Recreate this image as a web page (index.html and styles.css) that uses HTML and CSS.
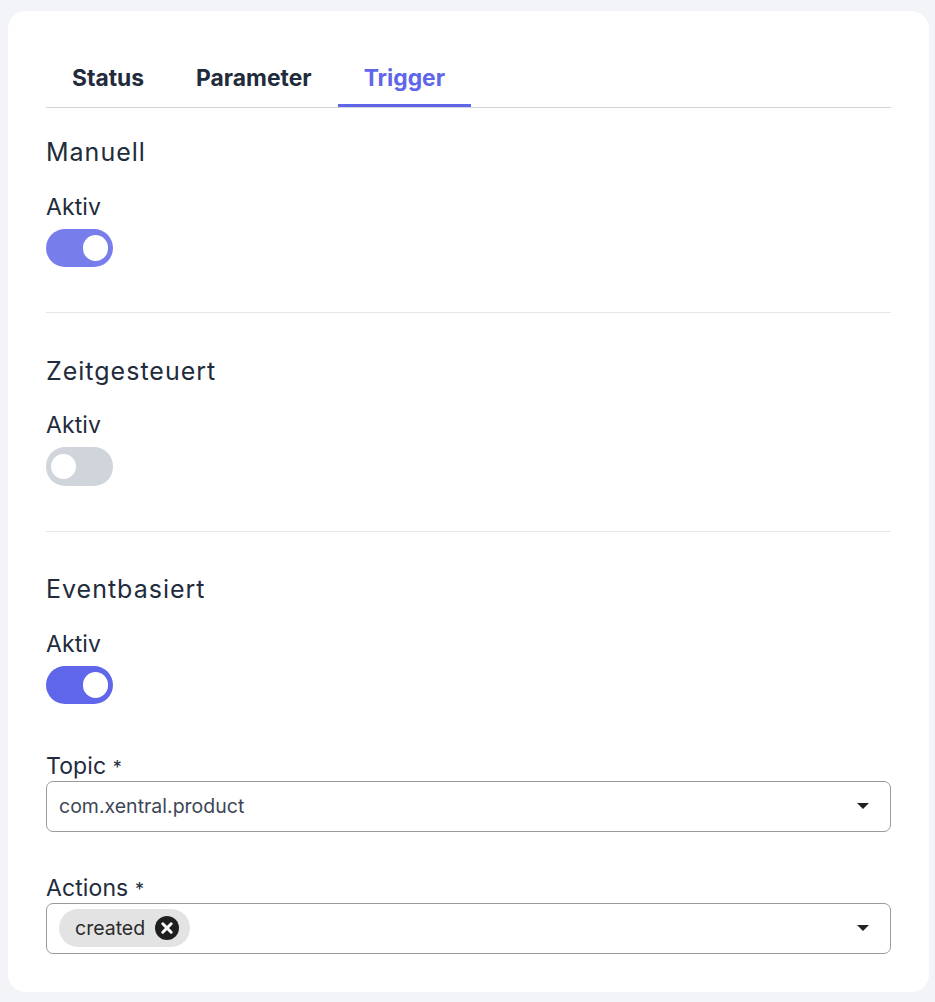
FILE: index.html
```html
<!DOCTYPE html>
<html>
	<head>
		<title>Trigger</title>
		<link rel="stylesheet" href="styles.css">
	</head>
	<body>
		<div class='card'>
			<div class='tabs'>
				<div class='tab'>Status</div>
				<div class='tab'>Parameter</div>
				<div class='tab active'>Trigger</div>
			</div>
			<div class='section'>
				<h2>Manuell</h2>
				<div class='label'>Aktiv</div>
				<div class='switch on faded'><span class='knob'></span></div>
			</div>
			<div class='section'>
				<h2>Zeitgesteuert</h2>
				<div class='label'>Aktiv</div>
				<div class='switch'><span class='knob'></span></div>
			</div>
			<div class='section last'>
				<h2>Eventbasiert</h2>
				<div class='label'>Aktiv</div>
				<div class='switch on'><span class='knob'></span></div>
				<div class='field'>
					<div class='label'>Topic <span class='req'>*</span></div>
					<div class='select'>
						<span class='value'>com.xentral.product</span>
						<span class='arrow'></span>
					</div>
				</div>
				<div class='field'>
					<div class='label'>Actions <span class='req'>*</span></div>
					<div class='select multi'>
						<span class='chip'>created
							<svg class='chip-x' width='24' height='24' viewBox='0 0 24 24'>
								<circle cx='12' cy='12' r='12' fill='#1f1f1f'/>
								<path d='M7.8 7.8 L16.2 16.2 M16.2 7.8 L7.8 16.2' stroke='#fff' stroke-width='3' stroke-linecap='round'/>
							</svg>
						</span>
						<span class='arrow'></span>
					</div>
				</div>
			</div>
		</div>
	</body>
</html>
```

FILE: styles.css
```css
html, body {
	margin: 0;
	height: 100%;
}
body {
	background-color: #f3f4f8;
	padding: 11px 6px 10px 8px;
	box-sizing: border-box;
	font-family: Inter, "Noto Sans", sans-serif;
	color: #212b3b;
}
.card {
	background-color: #fff;
	border-radius: 18px;
	height: 981px;
	box-sizing: border-box;
	padding: 46px 38px 0;
}
.tabs {
	display: flex;
	border-bottom: 1px solid #d2d4da;
	height: 50px;
}
.tab {
	padding: 8px 26px 0;
	font-size: 22.85px;
	line-height: 26px;
	font-weight: 700;
	box-sizing: border-box;
}
.tab.active {
	color: #5f66e9;
	border-bottom: 3px solid #5f66e9;
}
.section {
	padding: 29px 0 45px;
	border-bottom: 1px solid #e6e7ea;
}
.section + .section {
	padding-top: 42.7px;
}
.section.last {
	border-bottom: none;
	padding-bottom: 0;
}
h2 {
	margin: 0 0 26.6px;
	font-size: 25px;
	line-height: 30px;
	font-weight: 400;
	letter-spacing: 1px;
}
.label {
	font-size: 23px;
	line-height: 26px;
	letter-spacing: 0.1px;
	margin-bottom: 9px;
}
.req {
	font-size: 18px;
}
.switch {
	width: 67px;
	height: 38.4px;
	border-radius: 19.2px;
	background-color: #d0d5dc;
	display: flex;
	align-items: center;
	padding: 0 4.7px;
	box-sizing: border-box;
}
.switch.on {
	background-color: #5f66e9;
	justify-content: flex-end;
}
.switch.faded {
	background-color: #777eeb;
}
.knob {
	width: 25.6px;
	height: 25.6px;
	border-radius: 50%;
	background-color: #fff;
}
.field {
	margin-top: 48.5px;
}
.field + .field {
	margin-top: 43px;
}
.field .label {
	margin-bottom: 0;
}
.select {
	height: 51px;
	border: 1px solid #9a9a9a;
	border-radius: 7px;
	box-sizing: border-box;
	display: flex;
	align-items: center;
	justify-content: space-between;
	padding: 0 21px 0 12px;
}
.value {
	font-size: 19.5px;
	color: #3d4656;
}
.arrow {
	width: 0;
	height: 0;
	border-left: 6px solid transparent;
	border-right: 6px solid transparent;
	border-top: 6px solid #222;
}
.chip {
	display: flex;
	align-items: center;
	gap: 10px;
	height: 38px;
	padding: 0 11px 0 16px;
	border-radius: 19px;
	background-color: #e3e3e3;
	font-size: 19.5px;
	color: #2b2b2b;
}
```
